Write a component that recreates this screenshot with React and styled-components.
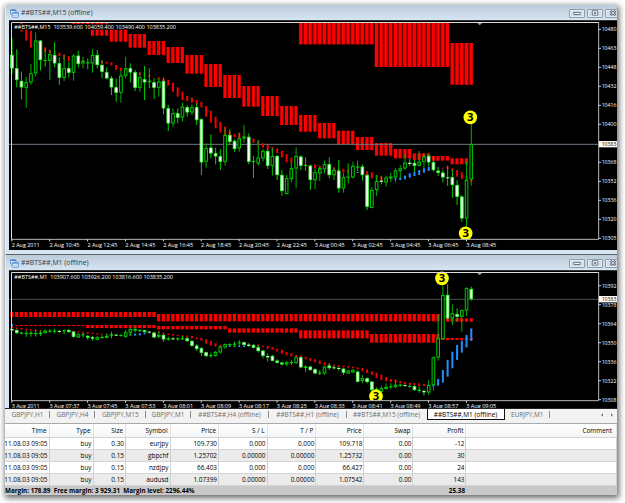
import React from "react";
import styled, { createGlobalStyle } from "styled-components";

const GlobalStyle = createGlobalStyle`
  * {
    box-sizing: border-box;
  }
  body {
    margin: 0;
    background: #fff;
    font-family: "Open Sans", "Noto Sans", sans-serif;
    overflow: hidden;
  }
`;

// chart coordinates are in thirds of a pixel
const STEP = 14.205;
const barX = (i) => 36 + i * STEP;

// [high, body top, body bottom, low, falling]
const m15Candles = [
  [115, 165, 205, 222, 1], [148, 205, 240, 262, 1], [215, 243, 262, 298, 1], [230, 247, 263, 323, 0],
  [192, 220, 247, 255, 0], [97, 122, 220, 230, 0], [120, 122, 180, 212, 1], [148, 180, 183, 200, 0],
  [150, 163, 182, 240, 0], [127, 165, 190, 202, 1], [172, 190, 233, 255, 1], [165, 205, 233, 243, 0],
  [185, 205, 218, 232, 1], [163, 167, 218, 242, 0], [152, 167, 192, 203, 1], [170, 183, 190, 205, 0],
  [175, 187, 190, 208, 0], [148, 165, 190, 218, 0], [150, 165, 195, 205, 1], [180, 195, 215, 235, 1],
  [202, 217, 235, 238, 1], [228, 235, 262, 285, 1], [235, 262, 278, 305, 1], [213, 227, 278, 308, 0],
  [170, 205, 227, 235, 0], [190, 205, 217, 247, 1], [210, 217, 263, 273, 1], [215, 232, 263, 275, 0],
  [198, 238, 247, 300, 1], [205, 243, 246, 265, 0], [235, 247, 263, 297, 1], [235, 245, 263, 290, 0],
  [233, 243, 325, 343, 1], [315, 325, 370, 393, 1], [325, 340, 370, 382, 0], [325, 340, 353, 370, 1],
  [308, 320, 352, 365, 0], [315, 322, 337, 350, 1], [313, 322, 337, 345, 0], [310, 322, 360, 375, 1],
  [355, 358, 487, 525, 1], [430, 445, 485, 503, 0], [403, 443, 460, 475, 1], [443, 460, 469, 493, 1],
  [448, 469, 485, 510, 1], [385, 405, 485, 497, 0], [388, 405, 425, 435, 1], [418, 423, 447, 455, 1],
  [397, 415, 445, 455, 0], [375, 410, 415, 428, 0], [400, 411, 485, 493, 1], [468, 483, 486, 533, 0],
  [420, 473, 490, 497, 0], [447, 453, 475, 485, 0], [445, 453, 497, 507, 1], [445, 468, 497, 527, 0],
  [465, 468, 525, 540, 1], [510, 525, 573, 587, 1], [525, 535, 582, 583, 0], [485, 505, 537, 547, 0],
  [442, 468, 505, 565, 0], [465, 470, 497, 510, 1], [472, 495, 498, 512, 0], [493, 497, 540, 570, 1],
  [505, 517, 540, 567, 0], [500, 505, 520, 543, 0], [482, 493, 508, 520, 0], [472, 493, 525, 535, 1],
  [503, 510, 525, 540, 0], [480, 512, 565, 578, 1], [518, 532, 565, 578, 0], [490, 530, 533, 550, 0],
  [485, 498, 532, 535, 0], [482, 500, 503, 513, 0], [493, 500, 525, 542, 1], [523, 525, 620, 630, 1],
  [562, 570, 623, 625, 0], [525, 543, 570, 588, 0], [528, 542, 546, 553, 1], [528, 533, 547, 560, 0],
  [518, 530, 535, 547, 0], [505, 512, 532, 547, 0], [495, 505, 513, 535, 0], [463, 488, 505, 510, 0],
  [475, 488, 492, 498, 1], [480, 489, 497, 515, 1], [453, 485, 497, 500, 0], [460, 470, 485, 505, 0],
  [463, 468, 487, 498, 1], [470, 487, 510, 515, 1], [503, 512, 518, 527, 1], [510, 518, 532, 547, 1],
  [497, 532, 535, 558, 1], [510, 532, 555, 593, 1], [540, 555, 590, 615, 1], [585, 590, 655, 665, 1],
  [485, 540, 655, 715, 0], [370, 433, 538, 557, 0],
];

// [first bar, last bar, top, bottom]
const m15Clouds = [
  [13, 16, 67, 72], [17, 20, 67, 107], [21, 24, 80, 125], [25, 28, 102, 143], [29, 32, 123, 165],
  [33, 36, 141, 189], [37, 40, 165, 221], [41, 44, 192, 261], [45, 48, 225, 294], [49, 52, 258, 320],
  [53, 56, 288, 348], [57, 60, 318, 375], [61, 64, 345, 395], [65, 68, 369, 415], [69, 72, 392, 433],
  [73, 76, 411, 450], [77, 80, 429, 467], [81, 84, 447, 475], [85, 88, 460, 480], [89, 92, 468, 482],
  [93, 96, 475, 493], [61, 76, 67, 133], [77, 92, 67, 201], [93, 97, 129, 254],
];

// [bar, top, bottom]
const m15Red = [
  [2, 67, 95], [3, 72, 122], [4, 93, 143], [7, 142, 155], [8, 149, 160], [9, 153, 163], [10, 158, 168],
  [11, 163, 178], [12, 168, 183], [15, 180, 186], [19, 184, 190], [20, 185, 191], [21, 187, 196], [22, 195, 210],
  [23, 203, 213], [25, 207, 213], [27, 218, 225], [28, 220, 228], [29, 225, 230], [31, 232, 238],
  [32, 235, 243], [33, 240, 257], [34, 248, 275], [35, 262, 290], [36, 275, 300], [37, 288, 303],
  [38, 293, 308], [39, 300, 313], [40, 305, 322], [41, 318, 350], [42, 332, 368], [43, 350, 385],
  [44, 365, 397], [45, 380, 408], [46, 395, 407], [47, 402, 412], [48, 400, 415], [50, 408, 414],
  [51, 415, 428], [52, 423, 437], [53, 430, 443], [54, 435, 448], [55, 441, 455], [56, 445, 460],
  [57, 453, 472], [58, 462, 487], [59, 473, 487], [62, 493, 498], [64, 493, 505], [65, 497, 507],
  [66, 497, 505], [68, 502, 513], [69, 507, 515], [70, 507, 517], [71, 511, 518], [75, 513, 527],
  [76, 518, 535], [77, 525, 538], [78, 530, 542], [79, 533, 540], [91, 503, 506], [92, 500, 507],
  [93, 505, 513], [94, 510, 530], [95, 517, 537], [96, 527, 540], [97, 540, 546],
];

const m15Blue = [
  [73, 516, 519], [81, 535, 540], [82, 533, 540], [83, 527, 538], [84, 520, 533], [85, 515, 528],
  [86, 510, 525], [87, 505, 518], [88, 500, 513], [90, 502, 505],
];

const m1Candles = [
  [235, 237, 241, 243, 1], [238, 240, 249, 252, 1], [245, 248, 251, 253, 0], [243, 249, 252, 260, 0],
  [244, 248, 252, 260, 0], [240, 249, 252, 260, 0], [242, 248, 252, 258, 0], [238, 242, 249, 251, 0],
  [238, 242, 245, 248, 0], [236, 242, 245, 250, 0], [240, 243, 246, 248, 1], [238, 241, 244, 252, 0],
  [238, 240, 246, 248, 1], [243, 245, 260, 263, 1], [250, 253, 262, 264, 0], [248, 253, 256, 262, 0],
  [255, 258, 263, 270, 1], [258, 262, 266, 272, 1], [258, 262, 269, 270, 0], [256, 261, 264, 266, 0],
  [250, 258, 263, 265, 0], [245, 253, 257, 265, 0], [252, 254, 257, 258, 1], [253, 255, 258, 260, 0],
  [240, 247, 260, 264, 0], [235, 237, 248, 258, 0], [230, 237, 242, 248, 0], [237, 240, 243, 246, 0],
  [239, 241, 246, 248, 1], [243, 245, 248, 250, 1], [245, 248, 262, 265, 1], [245, 255, 260, 265, 0],
  [250, 255, 268, 275, 1], [260, 265, 269, 272, 0], [262, 265, 268, 270, 1], [262, 265, 268, 272, 0],
  [258, 265, 268, 270, 0], [262, 265, 273, 276, 1], [270, 273, 287, 290, 1], [283, 287, 297, 303, 1],
  [290, 295, 308, 318, 1], [305, 307, 318, 322, 1], [308, 315, 318, 323, 0], [303, 306, 317, 320, 0],
  [288, 290, 307, 310, 0], [280, 283, 292, 296, 0], [280, 282, 285, 290, 0], [275, 281, 284, 292, 0],
  [270, 277, 280, 288, 0], [275, 277, 285, 287, 1], [280, 284, 288, 290, 1], [282, 285, 293, 295, 1],
  [285, 292, 303, 308, 1], [300, 302, 317, 325, 1], [310, 318, 322, 335, 1], [315, 318, 332, 334, 1],
  [328, 332, 338, 341, 1], [335, 338, 343, 346, 1], [333, 337, 343, 348, 0], [330, 336, 339, 345, 0],
  [320, 322, 338, 342, 0], [320, 322, 352, 355, 1], [345, 350, 354, 365, 0], [348, 350, 360, 362, 1],
  [355, 358, 370, 373, 1], [360, 368, 371, 375, 0], [348, 350, 370, 375, 0], [340, 347, 354, 360, 1],
  [347, 352, 355, 358, 1], [350, 354, 357, 362, 1], [355, 356, 368, 375, 1], [360, 362, 370, 372, 0],
  [357, 360, 367, 369, 0], [362, 365, 395, 397, 1], [375, 385, 393, 400, 0], [382, 385, 396, 400, 1],
  [393, 395, 420, 438, 1], [412, 418, 430, 440, 1], [408, 415, 425, 430, 0], [400, 411, 416, 420, 0],
  [400, 409, 412, 416, 0], [388, 404, 411, 415, 0], [402, 404, 407, 410, 0], [403, 405, 408, 411, 1],
  [403, 408, 411, 413, 0], [406, 409, 420, 422, 1], [410, 419, 423, 428, 0], [418, 423, 427, 437, 1],
  [390, 405, 427, 435, 0], [320, 322, 405, 422, 0], [195, 265, 322, 332, 0], [80, 135, 267, 269, 0],
  [103, 135, 205, 210, 1], [163, 190, 205, 225, 0], [175, 192, 200, 215, 1], [178, 181, 200, 245, 0],
  [112, 115, 181, 198, 0], [110, 117, 147, 152, 1],
];

const m1Clouds = [
  [0, 30, 186, 201], [31, 90, 192, 214], [92, 97, 205, 215],
  [1, 15, 225, 228], [16, 30, 225, 234], [31, 45, 228, 238], [46, 60, 235, 248], [61, 75, 241, 265],
  [76, 90, 252, 278], [91, 97, 264, 270],
];

const m1Red = [
  [0, 229, 234], [1, 232, 237], [2, 234, 239], [3, 236, 241], [4, 238, 242], [5, 238, 243], [6, 240, 244],
  [13, 243, 247], [14, 244, 248], [15, 245, 249], [16, 246, 251], [17, 248, 252], [18, 250, 254],
  [19, 251, 254], [20, 252, 255], [31, 244, 249], [32, 248, 253], [33, 251, 255], [34, 252, 257],
  [35, 255, 258], [36, 256, 260], [37, 257, 262], [38, 258, 265], [39, 262, 268], [40, 264, 272],
  [41, 268, 281], [42, 272, 287], [43, 280, 290], [44, 285, 292], [45, 283, 287], [50, 281, 285], [52, 283, 290],
  [53, 287, 291], [54, 288, 296], [55, 291, 299], [56, 296, 305], [57, 299, 311], [58, 306, 316],
  [59, 310, 319], [60, 315, 322], [61, 317, 323], [62, 320, 328], [63, 324, 333], [64, 328, 337],
  [65, 332, 342], [66, 337, 346], [67, 341, 347], [68, 344, 349], [69, 346, 351], [70, 347, 352],
  [71, 348, 353], [72, 350, 355], [73, 352, 358], [74, 354, 363], [75, 358, 369], [76, 364, 375],
  [77, 368, 384], [78, 374, 390], [79, 381, 394], [80, 387, 396], [81, 390, 398], [82, 393, 400],
  [83, 396, 402], [84, 398, 404], [85, 399, 405], [86, 400, 408], [87, 402, 408],
];

const m1Blue = [
  [0, 222, 228], [24, 252, 256], [25, 251, 257], [26, 251, 257], [27, 250, 256], [28, 248, 253],
  [46, 287, 291], [47, 287, 291], [48, 287, 291], [49, 287, 291], [88, 405, 409], [89, 405, 410], [90, 387, 407],
  [91, 360, 398], [92, 330, 380], [93, 305, 355], [94, 285, 330], [95, 272, 308], [96, 255, 292],
  [97, 235, 273],
];

const charts = [
  {
    title: "##BTS##,M15 (offline)",
    caption: "##BTS##,M15  103539.600 104059.400 103490.400 103835.200",
    captionWidth: 485,
    height: 230,
    bottom: 718,
    price: 433,
    lineColor: "#6d7885",
    axisStart: 88,
    axis: ["10480", "10463", "10448", "10432", "10416", "10400", "", "10368", "10352", "10336", "10320", "10305"],
    times: [
      "2 Aug 2011", "2 Aug 10:45", "2 Aug 12:45", "2 Aug 14:45", "2 Aug 16:45", "2 Aug 18:45", "2 Aug 20:45",
      "2 Aug 22:45", "3 Aug 00:45", "3 Aug 02:45", "3 Aug 04:45", "3 Aug 06:45", "3 Aug 08:45",
    ],
    candles: m15Candles,
    clouds: m15Clouds,
    red: m15Red,
    blue: m15Blue,
    signals: [[1411, 352], [1397, 700]],
  },
  {
    title: "##BTS##,M1 (offline)",
    caption: "##BTS##,M1  103907.600 103926.200 103816.600 103835.200",
    captionWidth: 476,
    height: 138,
    bottom: 452,
    price: 148,
    lineColor: "#4b5055",
    axisStart: 107,
    axis: ["10392", "10378", "10364", "10350", "10336", "10322", "10308"],
    times: [
      "3 Aug 2011", "3 Aug 07:37", "3 Aug 07:45", "3 Aug 07:53", "3 Aug 08:01", "3 Aug 08:09", "3 Aug 08:17",
      "3 Aug 08:25", "3 Aug 08:33", "3 Aug 08:41", "3 Aug 08:49", "3 Aug 08:57", "3 Aug 09:05",
    ],
    candles: m1Candles,
    clouds: m1Clouds,
    red: m1Red,
    blue: m1Blue,
    signals: [[1326, 85], [1128, 439]],
  },
];

const tabs = [
  { label: "GBPJPY,H1", width: 45 },
  { label: "GBPJPY,H4", width: 45 },
  { label: "GBPJPY,M15", width: 50.5 },
  { label: "GBPJPY,M1", width: 45 },
  { label: "##BTS##,H4 (offline)", width: 78 },
  { label: "##BTS##,H1 (offline)", width: 78 },
  { label: "##BTS##,M15 (offline)", width: 80 },
  { label: "##BTS##,M1 (offline)", width: 78, active: true },
  { label: "EURJPY,M1", width: 45.5 },
];

const columns = ["Time", "Type", "Size", "Symbol", "Price", "S / L", "T / P", "Price", "Swap", "Profit", "Comment"];

const trades = [
  ["11.08.03 09:05", "buy", "0.30", "eurjpy", "109.730", "0.000", "0.000", "109.718", "0.00", "-12", ""],
  ["11.08.03 09:05", "buy", "0.15", "gbpchf", "1.25702", "0.00000", "0.00000", "1.25732", "0.00", "30", ""],
  ["11.08.03 09:05", "buy", "0.15", "nzdjpy", "66.403", "0.000", "0.000", "66.427", "0.00", "24", ""],
  ["11.08.03 09:05", "buy", "0.15", "audusd", "1.07399", "0.00000", "0.00000", "1.07542", "0.00", "143", ""],
];

function Candle({ x, data }) {
  const [high, top, bottom, low, falling] = data;
  if (bottom - top < 5) {
    return (
      <g fill="#00d000">
        <rect x={x - 1.5} y={high} width="3" height={low - high} />
        <rect x={x - 5} y={top} width="10" height={bottom - top} fill={falling ? "#a8f5a8" : "#00e000"} />
      </g>
    );
  }
  return (
    <g>
      <rect x={x - 1.5} y={high} width="3" height={low - high} fill={falling ? "#00d000" : "#00b000"} />
      <rect
        x={x - 4}
        y={top + 1}
        width="8"
        height={bottom - top - 2}
        fill={falling ? "#fff" : "#001000"}
        stroke={falling ? "#40f540" : "#00d800"}
        strokeWidth="2.7"
      />
    </g>
  );
}

function Chart({ chart }) {
  const { height, bottom, price } = chart;
  return (
    <ChartSvg width="608" height={height} viewBox={`27 60 1824 ${height * 3}`}>
      {chart.clouds.map(([from, to, top, end], n) => (
        <g key={n}>
          <rect
            x={barX(from) - 6}
            y={top}
            width={(to - from) * STEP + 11}
            height={end - top}
            fill={end - top > 60 && from > 60 ? "#700000" : "#200000"}
          />
          {Array.from({ length: to - from + 1 }, (_, k) => (
            <rect key={k} x={barX(from + k) - 5} y={top} width="9.3" height={end - top} fill="#f00" />
          ))}
        </g>
      ))}
      <rect x="27" y={price - 1.5} width="1808" height="3" fill={chart.lineColor} />
      {chart.red.map(([i, top, end]) => (
        <rect key={i} x={barX(i) - 3} y={top} width="6" height={end - top} fill="#f00000" />
      ))}
      {chart.blue.map(([i, top, end]) => (
        <rect key={i} x={barX(i) - 3} y={top} width="6" height={end - top} fill="#1e90ff" />
      ))}
      {chart.candles.map((data, i) => (
        <Candle key={i} x={barX(i)} data={data} />
      ))}
      {chart.signals.map(([x, y]) => (
        <g key={x}>
          <circle cx={x} cy={y} r="20.5" fill="#ff0" />
          <Signal x={x} y={y + 12}>3</Signal>
        </g>
      ))}
      <rect x="27" y={bottom} width="1824" height="100" fill="#000" />
      <rect x="40" y="73" width={chart.captionWidth + 8} height="16" fill="#000" />
      <ChartText x="43" y="86" textLength={chart.captionWidth} lengthAdjust="spacingAndGlyphs">
        {chart.caption}
      </ChartText>
      <path d="M1429 67h20l-10 9z" fill="#8497a8" />
      <rect x="27" y="60" width="1824" height="3" fill="#333" />
      <path d={`M1796 67.5H34.5V${bottom}`} fill="none" stroke="#dcdcdc" strokeWidth="3" />
      <path d={`M33 ${bottom}H1796V66`} fill="none" stroke="#b8b8b8" strokeWidth="3" />
      {chart.times.map((time, i) => (
        <g key={time}>
          <rect x={barX(i * 8) - 2} y={bottom} width="3" height="6" fill="#ddd" />
          <ChartText
            x={barX(i * 8) - 1}
            y={bottom + 22}
            textLength={i ? 90 : 84}
            lengthAdjust="spacingAndGlyphs"
          >
            {time}
          </ChartText>
        </g>
      ))}
      {chart.axis.map((label, i) => (
        <g key={i}>
          <rect x="1796" y={chart.axisStart + i * 57 - 1.5} width="7" height="3" fill="#ccc" />
          {label && (
            <ChartText x="1805" y={chart.axisStart + i * 57 + 6} textLength="44" lengthAdjust="spacingAndGlyphs">
              {label}
            </ChartText>
          )}
        </g>
      ))}
      <rect x="1797" y={price - 10} width="60" height="19" fill="#fff" />
      <ChartText x="1805" y={price + 5} textLength="44" lengthAdjust="spacingAndGlyphs" $dark>
        10383
      </ChartText>
    </ChartSvg>
  );
}

function WindowIcon() {
  return (
    <svg width="9" height="9" viewBox="0 0 9 9" fill="#eef5ff" stroke="#4b83d0" strokeWidth=".8">
      <rect x=".5" y=".6" width="5.4" height="4.4" rx=".6" />
      <path d="M.5 1.5h5.4" strokeWidth="1.1" />
      <rect x="2.2" y="3.3" width="6.2" height="5" rx=".6" />
      <path d="M2.2 4.1h6.2" strokeWidth="1.1" />
      <path d="M3.5 7V6M5.2 7.2V5.6M6.9 7V5.4" strokeWidth=".6" />
    </svg>
  );
}

function WindowButtons() {
  return (
    <Buttons>
      <Button>
        <svg width="8" height="6" viewBox="0 0 8 6">
          <rect x=".8" y="2.4" width="6.4" height="2.2" rx=".4" fill="#fff" stroke="#535c69" strokeWidth=".9" />
        </svg>
      </Button>
      <Button>
        <svg width="8" height="6" viewBox="0 0 8 6" fill="#fff" stroke="#535c69">
          <path d="M1.3.7h5.4v4.4H1.3z" strokeWidth=".8" />
          <path d="M3 2.5h2v1H3z" strokeWidth=".7" />
        </svg>
      </Button>
      <Button>
        <svg width="8" height="6" viewBox="0 0 8 6">
          <path d="M1.5.8l5 4.4M6.5.8l-5 4.4" stroke="#535c69" strokeWidth="2.2" />
          <path d="M1.7 1l4.6 4M6.3 1L1.7 5" stroke="#fff" strokeWidth=".8" />
        </svg>
      </Button>
    </Buttons>
  );
}

function App() {
  return (
    <Page>
      <GlobalStyle />
      <Terminal>
        {charts.map((chart) => (
          <ChartWindow key={chart.title}>
            <TitleBar>
              <WindowIcon />
              <Title>{chart.title}</Title>
              <WindowButtons />
            </TitleBar>
            <Chart chart={chart} />
          </ChartWindow>
        ))}
        <TabBar>
          {tabs.map((tab) => (
            <Tab key={tab.label} $width={tab.width} $active={tab.active}>{tab.label}</Tab>
          ))}
          <Arrows>
            <svg width="14" height="6" viewBox="0 0 14 6" fill="#777">
              <path d="M3 1.2v3.6L1 3zM11 1.2v3.6L13 3z" />
            </svg>
          </Arrows>
        </TabBar>
        <HeaderRow>
          {columns.map((column, i) => (
            <HeaderCell key={i}>{column}</HeaderCell>
          ))}
        </HeaderRow>
        {trades.map((trade, i) => (
          <TradeRow key={i} $shaded={i % 2 === 1}>
            {trade.map((value, k) => (
              <Cell key={k}>{value}</Cell>
            ))}
          </TradeRow>
        ))}
        <StatusRow>
          <Balance>{"Margin: 178.89  Free margin: 3 929.31  Margin level: 2296.44%"}</Balance>
          <Total>25.38</Total>
        </StatusRow>
      </Terminal>
    </Page>
  );
}

const Page = styled.div`
  width: 625px;
  height: 503px;
  padding: 5px 8px 8px 5px;
  background: #fff;
`;

const Terminal = styled.div`
  width: 612px;
  height: 490px;
  overflow: hidden;
  background: #f3f3f3;
  box-shadow: 1px 2px 6px 1px rgba(0, 0, 0, 0.6);
`;

const ChartWindow = styled.div`
  display: flex;
  flex-direction: column;
  padding: 0 0 4px 3px;
  background: #d7e4f2;
  border-left: 1px solid #e8eef5;

  & + & {
    height: 154px;
    padding-bottom: 0;
    border-top: 1px solid #59616b;
  }
`;

const TitleBar = styled.div`
  display: flex;
  flex: none;
  align-items: center;
  gap: 2px;
  height: 15px;
  margin-left: -3px;
  padding: 1px 0 0 4px;
  background: linear-gradient(#bdcbd9, #d6e5f3);
`;

const Title = styled.div`
  color: #333d49;
  font-size: 6.85px;
  line-height: 10px;
  white-space: nowrap;
`;

const Buttons = styled.div`
  display: flex;
  gap: 2px;
  margin-left: auto;
  margin-right: -4px;
`;

const Button = styled.div`
  display: flex;
  align-items: center;
  justify-content: center;
  width: 16px;
  height: 9px;
  border: 1px solid #8e9dae;
  border-radius: 1px;
  background: #cfdce9;
  box-shadow: inset 0 0 0 1px #e2ebf4;
`;

const ChartSvg = styled.svg`
  display: block;
  flex: none;
  background: #000;
`;

const ChartText = styled.text`
  fill: ${(props) => (props.$dark ? "#000" : "#fff")};
  font-size: 17px;
  white-space: pre;
`;

const Signal = styled.text`
  fill: #000;
  font-size: 34px;
  font-weight: 700;
  text-anchor: middle;
`;

const TabBar = styled.div`
  display: flex;
  height: 16px;
  border-top: 1px solid #222;
  border-bottom: 1px solid #a9a9a9;
  background: #f2f2f2;
`;

const Tab = styled.div`
  position: relative;
  flex: none;
  width: ${(props) => props.$width}px;
  height: 11px;
  color: ${(props) => (props.$active ? "#000" : "#6c6c6c")};
  background: ${(props) => (props.$active ? "#fff" : "transparent")};
  border: 0 solid #111;
  border-width: ${(props) => (props.$active ? "0 1px 1px" : "0")};
  font-size: 6.45px;
  line-height: 11px;
  text-align: center;
  white-space: nowrap;

  &::after {
    content: "";
    display: ${(props) => (props.$active ? "none" : "block")};
    position: absolute;
    top: 2px;
    right: 0;
    width: 1px;
    height: 7px;
    background: #888;
  }

  &:nth-child(7)::after {
    display: none;
  }
`;

const Arrows = styled.div`
  display: flex;
  align-items: center;
  margin-left: auto;
  padding: 0 3px 3px 0;
`;

const Row = styled.div`
  display: grid;
  grid-template-columns: 44.5px 44px 32.5px 44.5px 48.5px 48.5px 48.8px 48.2px 49px 53px 1fr;
`;

const HeaderRow = styled(Row)`
  height: 14px;
  background: linear-gradient(#fff, #f4f5f6);
  border-bottom: 1px solid #d2d2d2;
`;

const TradeRow = styled(Row)`
  height: 12px;
  background: ${(props) => (props.$shaded ? "#ebebeb" : "#fff")};
  border-bottom: 1px solid #d4d4d4;
`;

const Cell = styled.div`
  display: flex;
  justify-content: flex-end;
  padding-right: 1px;
  border-right: 1px solid #cfcfcf;
  color: #000;
  font-size: 6.4px;
  line-height: 11px;
  white-space: nowrap;

  &:last-child {
    padding-right: 4px;
  }
`;

const HeaderCell = styled(Cell)`
  padding-right: 2px;
  border-color: #e4e4e4;
  line-height: 13px;
`;

const StatusRow = styled.div`
  display: flex;
  height: 10px;
  background: #c9c9c9;
  font-size: 6.3px;
  font-weight: 700;
  line-height: 10px;
  white-space: pre;
`;

const Balance = styled.div`
  width: 400px;
`;

const Total = styled.div`
  width: 60px;
  text-align: right;
`;

export default App;
